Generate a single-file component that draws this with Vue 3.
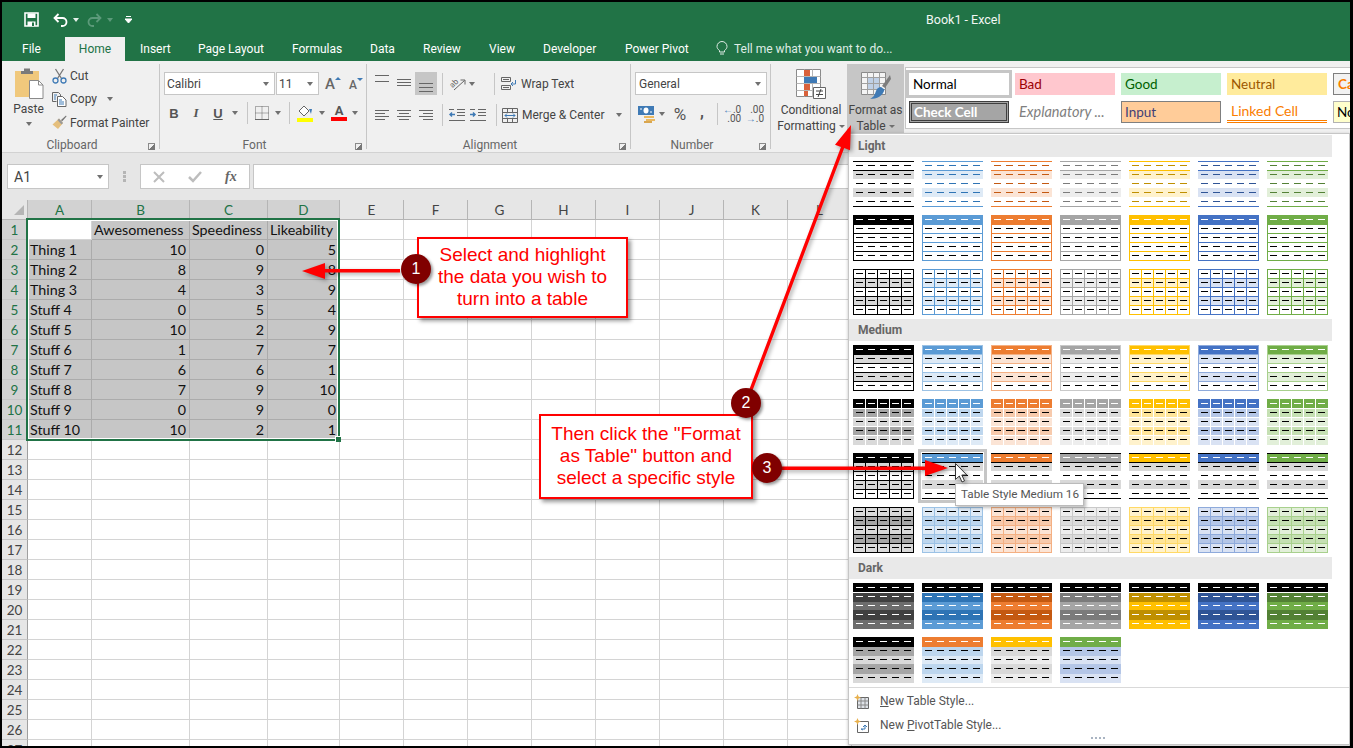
<template>
  <div class="root">
    <header class="titlebar">
      <div class="qat">
        <svg class="save" width="15" height="15" viewBox="0 0 15 15"><path d="M1 1h13v13H1z" fill="none" stroke="#fff" stroke-width="1.6"/><path d="M3.500 1.500h8v4.500h-8zM3.500 9.500h8V14h-8z" fill="#fff"/><path d="M8 10.500h2V14H8z" fill="#217346"/></svg>
        <svg class="undo" width="15" height="14" viewBox="0 0 15 14"><path d="M5.500 1 1.500 5l4 4" fill="none" stroke="#fff" stroke-width="1.800"/><path d="M2 5h7.500a4 4 0 0 1 0 8H8" fill="none" stroke="#fff" stroke-width="1.800"/></svg>
        <i class="caret w"></i>
        <svg class="redo" width="15" height="14" viewBox="0 0 15 14"><path d="M9.500 1l4 4-4 4" fill="none" stroke="#5c9a7a" stroke-width="1.800"/><path d="M13 5H5.500a4 4 0 0 0 0 8H7" fill="none" stroke="#5c9a7a" stroke-width="1.800"/></svg>
        <i class="caret dim"></i>
        <svg class="custom" width="7" height="8" viewBox="0 0 7 8"><path d="M1 .5h5M0 3h7l-3.500 4z" stroke="#fff" fill="#fff" stroke-width="1"/></svg>
      </div>
      <div class="doc">Book1 - Excel</div>
    </header>

    <nav class="tabs">
      <span class="tab file">File</span>
      <span class="tab home">Home</span>
      <span v-for="t in tabs" :key="t" class="tab">{{ t }}</span>
      <span class="tab tell">
        <svg width="12" height="15" viewBox="0 0 12 15"><path d="M3.500 9.500C2 8.500 1 7 1 5.500a5 5 0 0 1 10 0c0 1.500-1 3-2.500 4v1.500h-5zM4 13h4" fill="none" stroke="#dfece5" stroke-width="1"/></svg>
        <span>Tell me what you want to do...</span>
      </span>
    </nav>

    <section class="ribbon">
      <div class="group g-clip">
        <div class="gbody clip-body">
          <div class="paste">
            <svg width="30" height="33" viewBox="0 0 30 33"><path d="M1 4h24v26H1z" fill="#f0c87c"/><path d="M10 1.500h6V4h3v3H7V4h3z" fill="#7a7a7a"/><path d="M15.500 13.500h9l4.500 4.500v13.500H15.500z" fill="#fff" stroke="#8a8a8a"/><path d="M24.500 13.500V18H29" fill="none" stroke="#8a8a8a"/></svg>
            <span class="t">Paste</span>
            <i class="caret"></i>
          </div>
          <div class="clip-list">
            <div class="sm">
              <svg width="15" height="16" viewBox="0 0 15 16"><path d="M3.500 1 9.500 10.500M11.500 1 5.500 10.500" stroke="#777" stroke-width="1.300" fill="none"/><circle cx="3.500" cy="12.500" r="2.500" fill="none" stroke="#3f7ab5" stroke-width="1.300"/><circle cx="11.500" cy="12.500" r="2.500" fill="none" stroke="#3f7ab5" stroke-width="1.300"/></svg>
              <span class="t">Cut</span>
            </div>
            <div class="sm">
              <svg width="15" height="15" viewBox="0 0 15 15"><path d="M.5.500h6l2 2v2M.5.500v9h4" fill="none" stroke="#666"/><path d="M5.500 4.500h5l3.500 3.500v6.500H5.500z" fill="#fff" stroke="#666"/><path d="M2 3h3M2 5h2M2 7h2M7 8h3M7 10h5M7 12h5" stroke="#3f7ab5"/></svg>
              <span class="t">Copy</span>
              <i class="caret copy-caret"></i>
            </div>
            <div class="sm">
              <svg width="15" height="15" viewBox="0 0 15 15"><path d="M9 5 14 .5l.5 1-4.500 5z" fill="#777"/><path d="M7 3.500 11 8 6 14 .5 9.500z" fill="#e5bf7d"/><path d="M7 3.500 11 8 9.500 9.500 5.500 5z" fill="#999"/></svg>
              <span class="t">Format Painter</span>
            </div>
          </div>
        </div>
        <div class="glabel">Clipboard<i class="launch"></i></div>
      </div>

      <div class="group g-font">
        <div class="gbody col">
          <div class="font-r1">
            <span class="combo cb-font"><span>Calibri</span><i class="caret"></i></span>
            <span class="combo cb-size"><span>11</span><i class="caret"></i></span>
            <span class="bigA">A<i class="tri up"></i></span>
            <span class="smA">A<i class="tri dn"></i></span>
          </div>
          <div class="font-r2">
            <b class="fmt">B</b>
            <i class="fmt it">I</i>
            <u class="fmt un">U</u>
            <i class="caret"></i>
            <i class="vs"></i>
            <svg width="14" height="14" viewBox="0 0 14 14"><path d="M.5.500h13v13H.5zM7 .5v13M.5 7h13" fill="none" stroke="#666" stroke-dasharray="1 1"/><path d="M0 13.500h14" stroke="#666"/></svg>
            <i class="caret"></i>
            <i class="vs"></i>
            <svg width="17" height="17" viewBox="0 0 17 17"><path d="M7 1 12 6 7 11 2 6z" fill="#fff" stroke="#666"/><path d="M12 4h3l-1 5z" fill="#3f7ab5"/><path d="M0 13h16v4H0z" fill="#ffff00"/></svg>
            <i class="caret"></i>
            <span class="fc"><span>A</span><i class="fcbar"></i></span>
            <i class="caret"></i>
          </div>
        </div>
        <div class="glabel">Font<i class="launch"></i></div>
      </div>

      <div class="group g-align">
        <div class="gbody col">
          <div class="al-r1">
            <svg class="va-top" width="14" height="8" viewBox="0 0 14 8"><path d="M0 .5h14M0 6.500h14" stroke="#666"/></svg>
            <svg class="va-mid" width="14" height="8" viewBox="0 0 14 8"><path d="M0 .5h14M0 3.500h14M0 6.500h14" stroke="#666"/></svg>
            <span class="al-on"><svg width="14" height="9" viewBox="0 0 14 9"><path d="M0 .5h14M0 4.500h14M0 8.500h14" stroke="#666"/></svg></span>
            <i class="vs"></i>
            <svg class="orient" width="17" height="15" viewBox="0 0 17 15"><text x="1" y="10" transform="rotate(-45 5 8)" font-size="8" font-family="Roboto, sans-serif" fill="#666">ab</text><path d="M5 14 15.500 4.500M11.500 4h4.500v4.500" fill="none" stroke="#666"/></svg>
            <i class="caret"></i>
            <span></span>
            <i class="vs"></i>
            <span class="sm2">
              <svg width="16" height="15" viewBox="0 0 16 15"><path d="M.5 1.500h9v4h-9zM.5 9.500h9v4h-9zM2 3.500h6M2 11.500h6" fill="none" stroke="#666"/><path d="M10 8h4.500V4M10 8l2-2M10 8l2 2" fill="none" stroke="#3f7ab5"/></svg>
              <span class="t">Wrap Text</span>
            </span>
          </div>
          <div class="al-r2">
            <svg width="14" height="10" viewBox="0 0 14 10"><path d="M0 .5h14M0 3.500h10M0 6.500h14M0 9.500h10" stroke="#666"/></svg>
            <svg width="14" height="10" viewBox="0 0 14 10"><path d="M0 .5h14M2 3.500h10M0 6.500h14M2 9.500h10" stroke="#666"/></svg>
            <svg width="14" height="10" viewBox="0 0 14 10"><path d="M0 .5h14M4 3.500h10M0 6.500h14M4 9.500h10" stroke="#666"/></svg>
            <i class="vs"></i>
            <svg width="16" height="12" viewBox="0 0 16 12"><path d="M8 .5h8M8 3.500h8M8 6.500h8M0 11.500h16M0 .5h5" stroke="#666"/><path d="M6 5.500H1M3 3.500l-2 2 2 2" fill="none" stroke="#3f7ab5" stroke-width="1.500"/></svg>
            <svg width="16" height="12" viewBox="0 0 16 12"><path d="M8 .5h8M8 3.500h8M8 6.500h8M0 11.500h16M0 .5h5" stroke="#666"/><path d="M0 5.500h5M3 3.500l2 2-2 2" fill="none" stroke="#3f7ab5" stroke-width="1.500"/></svg>
            <i class="vs"></i>
            <span class="sm2">
              <svg width="16" height="15" viewBox="0 0 16 15"><path d="M.5.500h15v14H.5zM.5 4.500h15M.5 10.500h15M5.500.5v4M10.500.5v4M5.500 10.500v4M10.500 10.500v4" fill="none" stroke="#666"/><path d="M3 7.500h10M5 5.500l-2 2 2 2M11 5.500l2 2-2 2" fill="none" stroke="#3f7ab5"/></svg>
              <span class="t">Merge &amp; Center</span>
              <i class="caret merge-caret"></i>
            </span>
          </div>
        </div>
        <div class="glabel">Alignment<i class="launch"></i></div>
      </div>

      <div class="group g-num">
        <div class="gbody col">
          <div class="combo cb-gen"><span>General</span><i class="caret"></i></div>
          <div class="num-r2">
            <svg width="17" height="17" viewBox="0 0 17 17"><path d="M0 0h16v9H0z" fill="#3f7ab5"/><ellipse cx="8" cy="4.500" rx="2.500" ry="3" fill="#fff"/><path d="M2 3h2M12 6h2" stroke="#fff"/><path d="M6 10h10v2H6zM8 13h9v2H8z" fill="#e9b860"/><path d="M6 15h8v2H6z" fill="#d9a650"/></svg>
            <i class="caret"></i>
            <span class="pct">%</span>
            <span class="comma">,</span>
            <i class="vs"></i>
            <span class="dec"><span><em>←</em>.0</span><span>.00</span></span>
            <span class="dec"><span>.00</span><span><em>→</em>.0</span></span>
          </div>
        </div>
        <div class="glabel">Number<i class="launch"></i></div>
      </div>

      <div class="g-styles">
        <div class="big cond">
          <svg width="30" height="32" viewBox="0 0 30 32"><path d="M.5.500h24v27H.5z" fill="#fff" stroke="#8a8a8a"/><path d="M8.500.5v27M16.500.5v27M.5 7.500h24M.5 14.500h24M.5 21.500h24" stroke="#b5b5b5"/><path d="M8 1h6v6H8zM8 15h6v6H8zM8 22h4v5H8z" fill="#d9613a"/><path d="M8 8h13v6H8z" fill="#3f7ab5"/><path d="M17.500 18.500h12v11h-12z" fill="#fff" stroke="#666"/><path d="M20 22h7M20 25.500h7M25 20l-3 8" stroke="#444" fill="none"/></svg>
          <span class="t">Conditional</span>
          <span class="t">Formatting <i class="caret in"></i></span>
        </div>
        <div class="big fat">
          <svg width="30" height="29" viewBox="0 0 30 29"><path d="M.5.500h24v22H.5z" fill="#f4f4f4" stroke="#8a8a8a"/><path d="M6 5h13v13H6z" fill="#bfd0e6"/><path d="M6.500.5v22M12.500.5v22M18.500.5v22M.5 5.500h24M.5 11.500h24M.5 17.500h24" stroke="#a0a0a0"/><path d="M29 3 21 14l3 2 6-9z" fill="#7d7d7d"/><path d="M20 15l3.500 2.500C22 24 16 27 9 27c4-2 5-5 6-8 1-3 3-4 5-4z" fill="#3f7ab5"/></svg>
          <span class="t">Format as</span>
          <span class="t">Table <i class="caret in"></i></span>
        </div>
        <div class="gallery">
          <span class="st s-normal">Normal</span>
          <span class="st s-bad">Bad</span>
          <span class="st s-good">Good</span>
          <span class="st s-neutral">Neutral</span>
          <span class="st s-calc">Calculation</span>
          <span class="st s-check">Check Cell</span>
          <span class="st s-exp">Explanatory ...</span>
          <span class="st s-input">Input</span>
          <span class="st s-link">Linked Cell</span>
          <span class="st s-note">Note</span>
        </div>
      </div>
    </section>

    <section class="fbar">
      <div class="namebox"><span>A1</span><i class="caret"></i></div>
      <svg class="grip" width="3" height="11" viewBox="0 0 3 11"><path d="M0 0h3v3H0zM0 4h3v3H0zM0 8h3v3H0z" fill="#b5b5b5"/></svg>
      <div class="fbtns">
        <svg width="12" height="12" viewBox="0 0 12 12"><path d="M1 1l10 10M11 1 1 11" stroke="#bdbdbd" stroke-width="2"/></svg>
        <svg width="14" height="12" viewBox="0 0 14 12"><path d="M1 6l4 4 8-9" fill="none" stroke="#bdbdbd" stroke-width="2.500"/></svg>
        <span class="fx">fx</span>
      </div>
      <div class="finput"></div>
    </section>

    <section class="grid">
      <div v-for="c in cells" :key="c.k" :class="c.cls">
        <svg v-if="c.corner" width="10" height="10" viewBox="0 0 10 10"><path d="M10 0v10H0z" fill="#b5b5b5"/></svg>
        <template v-else>{{ c.text }}</template>
      </div>
      <div class="selection"><i class="handle"></i></div>
    </section>

    <div class="layer">
      <div class="dropdown">
        <template v-for="s in sections" :key="s.title">
          <div class="sec">{{ s.title }}</div>
          <div class="swatches">
            <svg v-for="(sw, i) in s.items" :key="i" :class="['sw', { hover: sw.hover }]" width="61" height="46" viewBox="0 0 61 46" shape-rendering="crispEdges">
              <rect v-for="(r, j) in sw.rects" :key="j" :x="r[0]" :y="r[1]" :width="r[2]" :height="r[3]" :fill="r[4]" />
            </svg>
          </div>
        </template>
        <div class="menu">
          <div class="mi">
            <svg width="15" height="15" viewBox="0 0 15 15"><path d="M3.500 3.500h11v11h-11z" fill="#dfe3e8" stroke="#666"/><path d="M7 3.500v11M11 3.500v11M3.500 7h11M3.500 11h11" stroke="#888"/><path d="M3.500 0l1 2.500 2.500 1-2.500 1-1 2.500-1-2.500L0 3.500l2.500-1z" fill="#e8b04c"/></svg>
            <span><u>N</u>ew Table Style...</span>
          </div>
          <div class="mi">
            <svg width="15" height="15" viewBox="0 0 15 15"><path d="M3.500 3.500h11v11h-11z" fill="#fff" stroke="#666"/><path d="M7 11h4V8M9 9l2-2 2 2M7 11l2 1" fill="none" stroke="#3f7ab5"/><path d="M3.500 0l1 2.500 2.500 1-2.500 1-1 2.500-1-2.500L0 3.500l2.500-1z" fill="#e8b04c"/></svg>
            <span>New <u>P</u>ivotTable Style...</span>
          </div>
          <div class="dots"><i></i><i></i><i></i><i></i></div>
        </div>
        <div class="tooltip">Table Style Medium 16</div>
      </div>

      <svg class="arrows" width="1353" height="748" viewBox="0 0 1353 748">
        <g fill="#ff0000" stroke="none">
          <path d="M325 269H400v3.500H325V279L302 271 325 263z"/>
          <path d="M744.400 402.500 841 147 835 144.700 851 125 850 150.300 844.200 148 747.600 403.500z"/>
          <path d="M767 466.500H925V460L948 468 925 476V470H767z"/>
        </g>
        <path d="M955.500 463.500v16l3.800-3.500 2.700 6 2.500-1.200-2.700-5.800h5z" fill="#fff" stroke="#333" stroke-width="1"/>
      </svg>

      <div class="note n1">Select and highlight<br>the data you wish to<br>turn into a table</div>
      <div class="note n3">Then click the "Format<br>as Table" button and<br>select a specific style</div>
      <div class="dot d1">1</div>
      <div class="dot d2">2</div>
      <div class="dot d3">3</div>
    </div>
  </div>
</template>

<script setup>
const tabs = ['Insert', 'Page Layout', 'Formulas', 'Data', 'Review', 'View', 'Developer', 'Power Pivot']

const data = [
  ['', 'Awesomeness', 'Speediness', 'Likeability'],
  ['Thing 1', 10, 0, 5], ['Thing 2', 8, 9, 8], ['Thing 3', 4, 3, 9], ['Stuff 4', 0, 5, 4],
  ['Stuff 5', 10, 2, 9], ['Stuff 6', 1, 7, 7], ['Stuff 7', 6, 6, 1], ['Stuff 8', 7, 9, 10],
  ['Stuff 9', 0, 9, 0], ['Stuff 10', 10, 2, 1],
]
const letters = ['A', 'B', 'C', 'D', 'E', 'F', 'G', 'H', 'I', 'J', 'K', 'L', 'M']

const cells = []
cells.push({ k: 'corner', corner: true, cls: 'ch corner' })
letters.forEach((l, i) => cells.push({ k: l, text: l, cls: ['ch', i < 4 ? 'on' : ''] }))
for (let r = 0; r < 27; r++) {
  cells.push({ k: 'r' + r, text: r + 1, cls: ['rh', r < 11 ? 'on' : ''] })
  letters.forEach((l, c) => {
    const v = r < 11 && c < 4 ? data[r][c] : ''
    const isSel = r < 11 && c < 4 && !(r === 0 && c === 0)
    cells.push({ k: l + r, text: v, cls: ['cell', isSel ? 'sel' : '', typeof v === 'number' ? 'num' : ''] })
  })
}

const P = [
  { c: '#000000', d: '#000000', b: '#000000', m: '#a6a6a6', l: '#d9d9d9' },
  { c: '#5b9bd5', d: '#2e74b5', b: '#9cc2e5', m: '#bdd6ee', l: '#deeaf6' },
  { c: '#ed7d31', d: '#c45911', b: '#f4b083', m: '#f7caac', l: '#fbe4d5' },
  { c: '#a5a5a5', d: '#7b7b7b', b: '#c9c9c9', m: '#dbdbdb', l: '#ededed' },
  { c: '#ffc000', d: '#bf8f00', b: '#ffd966', m: '#ffe599', l: '#fff2cc' },
  { c: '#4472c4', d: '#2f5496', b: '#8eaadb', m: '#b4c6e7', l: '#d9e2f3' },
  { c: '#70ad47', d: '#538135', b: '#a8d08d', m: '#c5e0b3', l: '#e2efd9' },
]

const DY = [4, 13, 22, 31, 40]
const XS = [12, 24, 36, 48]
const HS = [9, 18, 27, 36]
const dashes = (colors) => {
  const out = []
  colors.forEach((col, ri) => {
    for (let i = 0; i < 5; i++) out.push([3 + 12 * i, DY[ri], 7, 1, col])
  })
  return out
}
const hl = (col, ys) => ys.map((y) => [0, y, 61, 1, col])
const vl = (col, xs) => xs.map((x) => [x, 0, 1, 46, col])
const frame = (col) => [[0, 0, 61, 1, col], [0, 45, 61, 1, col], [0, 0, 1, 46, col], [60, 0, 1, 46, col]]
const K = '#000000'
const W = '#ffffff'

const kinds = {
  L1: (p) => [[0, 9, 61, 9, p.l], [0, 27, 61, 9, p.l], ...hl(p.c, [0, 9, 45]), ...dashes(Array(5).fill(p.d))],
  L2: (p) => [[0, 0, 61, 10, p.c], ...hl(p.c, HS), ...frame(p.c), ...dashes([W, K, K, K, K])],
  L3: (p) => [[0, 9, 61, 9, p.l], [0, 27, 61, 9, p.l], ...hl(p.c, HS), ...vl(p.c, XS), ...frame(p.c), ...dashes(Array(5).fill(K))],
  M1: (p) => [[0, 0, 61, 9, p.c], [0, 9, 61, 9, p.l], [0, 27, 61, 9, p.l], ...hl(p.b, HS), ...frame(p.b), ...dashes([W, K, K, K, K])],
  M2: (p) => [[0, 0, 61, 9, p.c], [0, 9, 61, 9, p.m], [0, 18, 61, 9, p.l], [0, 27, 61, 9, p.m], [0, 36, 61, 10, p.l], ...hl(W, HS), ...vl(W, XS), ...dashes([W, K, K, K, K])],
  M3: (p) => [[0, 0, 61, 9, p.c], [0, 9, 61, 9, '#d9d9d9'], [0, 27, 61, 9, '#d9d9d9'], ...hl(K, [0, 9, 45]), ...dashes([W, K, K, K, K])],
  M3K: (p) => [[0, 0, 61, 9, p.c], [0, 9, 61, 9, '#d9d9d9'], [0, 27, 61, 9, '#d9d9d9'], ...hl(K, HS), ...vl(K, XS), ...frame(K), ...dashes([W, K, K, K, K])],
  M4: (p) => [[0, 0, 61, 46, p.l], [0, 9, 61, 9, p.m], [0, 27, 61, 9, p.m], ...hl(p.b, HS), ...vl(p.b, XS), ...frame(p.b), ...dashes(Array(5).fill(K))],
  D1: (p) => {
    const dk = p.c === K ? '#404040' : p.d
    const lt = p.c === K ? '#6d6d6d' : p.c
    return [[0, 0, 61, 9, K], [0, 10, 61, 9, dk], [0, 19, 61, 8, lt], [0, 27, 61, 10, dk], [0, 37, 61, 9, lt], ...dashes(Array(5).fill(W))]
  },
}
const D2 = [
  [K, '#a6a6a6', '#d9d9d9', W],
  ['#ed7d31', '#bdd6ee', '#deeaf6', W],
  ['#ffc000', '#d9d9d9', '#ededed', W],
  ['#70ad47', '#b4c6e7', '#d9e2f3', W],
].map(([h, m, l, d]) => ({
  rects: [[0, 0, 61, 10, h], [0, 10, 61, 9, m], [0, 19, 61, 8, l], [0, 27, 61, 10, m], [0, 37, 61, 9, l], ...dashes([d, K, K, K, K])],
}))

const row = (name) => P.map((p) => ({ rects: kinds[name](p) }))
const m3 = P.map((p, i) => ({ rects: kinds[i === 0 ? 'M3K' : 'M3'](p), hover: i === 1 }))

const sections = [
  { title: 'Light', items: [...row('L1'), ...row('L2'), ...row('L3')] },
  { title: 'Medium', items: [...row('M1'), ...row('M2'), ...m3, ...row('M4')] },
  { title: 'Dark', items: [...row('D1'), ...D2] },
]
</script>

<style>
html, body { margin: 0; padding: 0; background: #000; }
</style>

<style scoped>
.root {
  position: relative;
  box-sizing: border-box;
  width: 1353px;
  height: 748px;
  overflow: hidden;
  background: #fff;
  border-style: solid;
  border-color: #000;
  border-width: 2px 3px 2px 2px;
  display: flex;
  flex-direction: column;
  font-family: Roboto, "Liberation Sans", sans-serif;
  font-size: 12px;
  color: #444;
}
svg { display: block; flex: none; }
i { font-style: normal; }
.orient { overflow: visible; }

.caret {
  display: block;
  width: 0;
  height: 0;
  border-left: 3.500px solid transparent;
  border-right: 3.500px solid transparent;
  border-top: 4px solid #707070;
  flex: none;
}
.caret.w { border-top-color: #e6f0ea; border-left-width: 3px; border-right-width: 3px; margin-left: 5px; }
.caret.dim { border-top-color: #5c9a7a; border-left-width: 3px; border-right-width: 3px; margin-left: 5px; }
.caret.in { display: inline-block; vertical-align: 2px; border-left-width: 3px; border-right-width: 3px; border-top-width: 3px; margin-left: 0; }

/* title bar */
.titlebar {
  height: 35px;
  flex: none;
  background: #217346;
  display: flex;
  align-items: center;
  color: #fff;
}
.qat { width: 924px; display: flex; align-items: center; padding-left: 22px; box-sizing: border-box; }
.undo { margin-left: 14px; }
.redo { margin-left: 8px; }
.custom { margin-left: 12px; }
.doc { font-size: 12.500px; color: #f2f7f4; }

/* tabs */
.tabs {
  height: 24px;
  flex: none;
  background: #217346;
  display: grid;
  grid-template-columns: 63px 60px 58px 94px 78px 53px 66px 54px 82px 100px 1fr;
  color: #fff;
  font-size: 12px;
}
.tab { display: flex; align-items: center; padding-left: 15px; box-sizing: border-box; padding-bottom: 1px; }
.tab.file { padding-left: 20px; }
.tab.home { background: #f0f0f0; color: #217346; justify-content: center; padding-left: 0; }
.tell { padding-left: 6px; gap: 6px; color: #dfece5; }

/* ribbon */
.ribbon {
  height: 92px;
  flex: none;
  box-sizing: border-box;
  background: #f0f0f0;
  border-bottom: 1px solid #d2d2d2;
  display: flex;
  padding-top: 3px;
  font-size: 12px;
}
.group {
  box-sizing: border-box;
  height: 85px;
  border-right: 1px solid #c6c6c6;
  display: flex;
  flex-direction: column;
  flex: none;
}
.gbody { flex: none; height: 73px; }
.col { display: flex; flex-direction: column; }
.glabel {
  position: relative;
  height: 17px;
  line-height: 17px;
  text-align: center;
  color: #666;
  padding-right: 17px;
  flex: none;
}
.launch {
  position: absolute;
  right: 4px;
  top: 6px;
  width: 6px;
  height: 6px;
  border-left: 1px solid #8a8a8a;
  border-top: 1px solid #8a8a8a;
  background: linear-gradient(135deg, transparent 45%, #777 45%);
}
.g-clip { width: 158px; }
.g-font { width: 207px; }
.g-align { width: 264px; }
.g-num { width: 140px; }

.clip-body { display: flex; }
.paste { width: 50px; display: flex; flex-direction: column; align-items: center; padding: 3px 0 0 3px; box-sizing: border-box; }
.paste .t { margin-top: 1px; line-height: 16px; }
.paste .caret { margin-top: 5px; }
.clip-list { display: flex; flex-direction: column; }
.sm { display: flex; align-items: center; height: 23.500px; gap: 3px; }
.copy-caret { margin-left: 7px; }
.t { color: #444; white-space: nowrap; }

.combo {
  box-sizing: border-box;
  background: #fff;
  border: 1px solid #c6c6c6;
  display: flex;
  align-items: center;
  justify-content: space-between;
  height: 23px;
  padding: 0 5px 0 2px;
  flex: none;
}
.font-r1 { display: flex; align-items: center; margin: 8px 0 0 4px; }
.cb-font { width: 111px; }
.cb-size { width: 43px; margin-left: 1px; }
.bigA, .smA { position: relative; display: block; color: #666; font-weight: 500; }
.bigA { font-size: 15px; margin-left: 6px; width: 16px; }
.smA { font-size: 12px; margin-left: 8px; width: 14px; padding-top: 2px; }
.tri { position: absolute; right: 0; top: 2px; width: 0; height: 0; border-left: 3px solid transparent; border-right: 3px solid transparent; }
.tri.up { border-bottom: 3px solid #3f7ab5; }
.tri.dn { border-top: 3px solid #3f7ab5; }

.font-r2 {
  display: grid;
  grid-template-columns: 22px 22px 22px 12px 12px 18px 14px 8px 24px 10px 24px 8px;
  justify-items: center;
  align-items: center;
  margin: 6px 0 0 3px;
  height: 24px;
}
.fmt { font-size: 13px; color: #555; font-family: "Liberation Sans", sans-serif; }
.it { font-style: italic; font-family: "Liberation Serif", serif; font-weight: 700; }
.un { font-weight: 700; }
.vs { display: block; width: 1px; height: 22px; background: #c6c6c6; }
.fc { display: flex; flex-direction: column; align-items: center; line-height: 12px; font-size: 13px; font-weight: 700; color: #555; }
.fcbar { display: block; width: 16px; height: 4px; background: #f00; }

.al-r1 {
  display: grid;
  grid-template-columns: 22px 22px 22px 10px 20px 10px 10px 14px auto;
  justify-items: center;
  align-items: center;
  margin: 8px 0 0 4px;
  height: 23px;
}
.va-top { align-self: start; margin-top: 3px; }
.va-mid { align-self: start; margin-top: 7px; }
.al-r1 .sm2 { justify-self: start; }
.al-on { width: 22px; height: 23px; background: #c6c6c6; display: flex; align-items: flex-start; justify-content: center; padding-top: 11px; box-sizing: border-box; }
.al-r2 {
  display: grid;
  grid-template-columns: 22px 22px 22px 10px 20px 22px 14px auto;
  justify-items: center;
  align-items: center;
  margin: 8px 0 0 4px;
  height: 24px;
}
.al-r2 .sm2 { justify-self: start; margin-left: -1px; }
.sm2 { display: flex; align-items: center; gap: 4px; }
.merge-caret { margin-left: 8px; }

.cb-gen { width: 132px; margin: 8px 0 0 4px; padding-left: 3px; }
.num-r2 {
  display: grid;
  grid-template-columns: 22px 10px 26px 18px 12px 18px 28px;
  justify-items: center;
  align-items: center;
  margin: 7px 0 0 4px;
  height: 24px;
}
.pct { font-size: 17px; color: #555; }
.comma { font-size: 16px; font-weight: 700; color: #555; margin-top: -6px; }
.dec { display: flex; flex-direction: column; font-size: 10px; line-height: 9px; color: #555; text-align: right; }
.dec em { font-style: normal; color: #3f7ab5; font-weight: 700; }

.g-styles { display: flex; flex: none; align-items: flex-start; }
.big { display: flex; flex-direction: column; align-items: center; flex: none; line-height: 16px; }
.cond { width: 76px; padding: 5px 0 0 4px; box-sizing: border-box; }
.cond .t:first-of-type { margin-top: 1px; }
.fat { width: 57px; height: 69px; background: #c6c6c6; padding-top: 8px; box-sizing: border-box; }
.fat .t:first-of-type { margin-top: 1px; }
.gallery {
  box-sizing: border-box;
  width: 446px;
  height: 62px;
  margin: 3px 0 0 1px;
  background: #fff;
  border: 1px solid #c6c6c6;
  border-right: 0;
  padding: 5px 0 0 3px;
  display: grid;
  grid-template-columns: repeat(5, 100px);
  grid-auto-rows: 22px;
  gap: 6px;
  overflow: hidden;
  font-family: Lato, "Liberation Sans", sans-serif;
  font-size: 13.500px;
}
.st { display: flex; align-items: center; padding: 0 0 1px 4px; box-sizing: border-box; white-space: nowrap; overflow: hidden; }
.s-normal { color: #000; outline: 3px solid #c6c6c6; }
.s-bad { background: #ffc7ce; color: #9c0006; }
.s-good { background: #c6efce; color: #006100; }
.s-neutral { background: #ffeb9c; color: #9c5700; }
.s-calc { background: #f2f2f2; border: 1px solid #7f7f7f; color: #fa7d00; font-weight: 700; }
.s-check { background: #a5a5a5; border: 3px double #3f3f3f; color: #fff; font-weight: 700; padding-left: 2px; }
.s-exp { color: #7f7f7f; font-style: italic; font-size: 14.500px; }
.s-input { background: #fc9; border: 1px solid #7f7f7f; color: #3f3f76; padding-left: 3px; }
.s-link { color: #fa7d00; border-bottom: 3px double #fa7d00; font-size: 14px; }
.s-note { background: #ffc; border: 1px solid #b2b2b2; color: #000; padding-left: 3px; }

/* formula bar */
.fbar {
  height: 47px;
  flex: none;
  box-sizing: border-box;
  background: #e6e6e6;
  display: flex;
  align-items: flex-start;
  padding-top: 11px;
}
.namebox {
  box-sizing: border-box;
  width: 102px;
  height: 25px;
  margin-left: 5px;
  background: #fff;
  border: 1px solid #c6c6c6;
  display: flex;
  align-items: center;
  justify-content: space-between;
  padding: 0 5px 0 6px;
  font-size: 14px;
}
.grip { margin: 7px 0 0 14px; }
.fbtns {
  box-sizing: border-box;
  width: 110px;
  height: 25px;
  margin-left: 14px;
  background: #fff;
  border: 1px solid #c6c6c6;
  display: flex;
  align-items: center;
  padding-left: 12px;
  gap: 23px;
}
.fx { font-family: "Liberation Serif", serif; font-style: italic; font-weight: 700; font-size: 14px; color: #666; }
.finput { flex: 1; height: 25px; margin-left: 3px; box-sizing: border-box; background: #fff; border: 1px solid #c6c6c6; border-right: 0; }

/* sheet */
.grid {
  position: relative;
  flex: 1;
  min-height: 0;
  overflow: hidden;
  display: grid;
  grid-template-columns: 26px 64px 98px 78px 72px repeat(8, 64px) 1fr;
  grid-auto-rows: 20px;
  font-family: Lato, "Liberation Sans", sans-serif;
  font-size: 14.300px;
  color: #111;
}
.ch, .rh {
  box-sizing: border-box;
  background: #e6e6e6;
  display: flex;
  align-items: center;
  justify-content: center;
  color: #444;
  font-size: 13.500px;
  border-right: 1px solid #b5b5b5;
  border-bottom: 1px solid #b5b5b5;
}
.ch.on, .rh.on { background: #d2d2d2; color: #217346; }
.rh { border-right-color: #9f9f9f; border-bottom-color: #c6c6c6; }
.corner { justify-content: flex-end; align-items: flex-end; padding: 0 3px 4px 0; }
.cell {
  box-sizing: border-box;
  border-right: 1px solid #d4d4d4;
  border-bottom: 1px solid #d4d4d4;
  display: flex;
  align-items: center;
  padding: 0 3px 0 2px;
  white-space: nowrap;
  overflow: hidden;
}
.cell.num { justify-content: flex-end; }
.cell.sel { background: #c6c6c6; border-color: #ababab; }
.selection {
  position: absolute;
  left: 24px;
  top: 18px;
  width: 314px;
  height: 223px;
  box-sizing: border-box;
  border: 2px solid #217346;
  box-shadow: inset 0 0 0 1px #fff;
  pointer-events: none;
}
.handle {
  position: absolute;
  right: -3px;
  bottom: -3px;
  width: 5px;
  height: 5px;
  background: #217346;
  border: 1px solid #fff;
  border-right: 0;
  border-bottom: 0;
  box-sizing: content-box;
}

/* overlays */
.layer { position: absolute; left: -2px; top: -2px; width: 1353px; height: 748px; }
.dropdown {
  position: absolute;
  left: 848px;
  top: 133px;
  box-sizing: border-box;
  width: 502px;
  height: 612px;
  padding-top: 1px;
  background: #fff;
  border: 1px solid #c6c6c6;
  box-shadow: 0 1px 3px rgba(0, 0, 0, .25);
}
.sec {
  width: 483px;
  height: 22px;
  line-height: 22px;
  background: #e9e9e9;
  padding-left: 9px;
  box-sizing: border-box;
  font-weight: 700;
  color: #666;
  font-size: 12px;
}
.swatches { display: flex; flex-wrap: wrap; gap: 8px; padding: 4px 0 4px 4px; width: 483px; box-sizing: border-box; }
.sw.hover { outline: 3px solid #c6c6c6; outline-offset: 1px; }
.menu { border-top: 1px solid #d9d9d9; padding-top: 1px; }
.mi { display: flex; align-items: center; height: 24px; gap: 11px; padding-left: 5px; color: #555; font-size: 12px; }
.dots { display: flex; justify-content: center; gap: 2px; margin-top: 0; padding-right: 2px; }
.dots i { display: block; width: 2px; height: 2px; background: #a9b4c2; }
.tooltip {
  position: absolute;
  left: 106px;
  top: 349px;
  width: 129px;
  height: 23px;
  box-sizing: border-box;
  line-height: 21px;
  padding-left: 5px;
  background: #fff;
  border: 1px solid #bbb;
  box-shadow: 2px 2px 3px rgba(0, 0, 0, .25);
  color: #555;
  font-size: 11.700px;
  white-space: nowrap;
}
.arrows { position: absolute; left: 0; top: 0; filter: drop-shadow(2px 2px 2px rgba(0, 0, 0, .35)); }
.note {
  position: absolute;
  box-sizing: border-box;
  background: #fff;
  border: 2px solid #f00;
  box-shadow: 3px 3px 4px rgba(0, 0, 0, .4);
  color: #f00;
  font-family: "Liberation Sans", Arial, sans-serif;
  font-size: 19px;
  line-height: 22px;
  text-align: center;
  white-space: nowrap;
}
.n1 { left: 417px; top: 237px; width: 211px; height: 81px; padding-top: 5px; }
.n3 { left: 539px; top: 414px; width: 214px; height: 85px; padding-top: 7px; }
.dot {
  position: absolute;
  width: 30px;
  height: 30px;
  border-radius: 50%;
  background: #800000;
  color: #fff;
  font-family: "Liberation Sans", Arial, sans-serif;
  font-size: 16px;
  line-height: 30px;
  text-align: center;
  box-shadow: 2px 2px 3px rgba(0, 0, 0, .4);
}
.d1 { left: 401px; top: 254px; }
.d2 { left: 731px; top: 388px; }
.d3 { left: 752px; top: 453px; }
</style>
